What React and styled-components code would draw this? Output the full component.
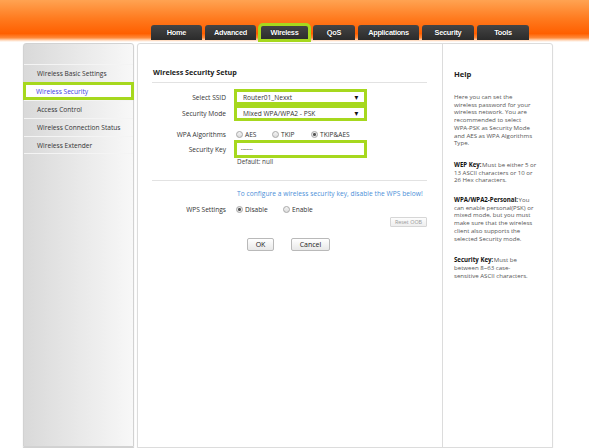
import styled, { createGlobalStyle } from 'styled-components';

const GlobalStyle = createGlobalStyle`
  html, body {
    margin: 0;
    padding: 0;
    background: #fff;
    font-family: "Open Sans", "Liberation Sans", Arial, sans-serif;
  }
`;

const GREEN = '#a6d81e';

const Header = styled.div`
  height: 42px;
  background: linear-gradient(
    to bottom,
    #ffa352 0%,
    #ff7a1e 45%,
    #ff5f00 80%,
    #ff8a3a 90%,
    #ffd9bd 96%,
    #ffffff 100%
  );
  display: flex;
  align-items: flex-end;
  padding-left: 151px;
  box-sizing: border-box;
`;

const Tabs = styled.div`
  display: flex;
  gap: 3px;
  margin-bottom: 2px;
  align-items: flex-end;
`;

const Tab = styled.div`
  width: ${p => p.$w}px;
  height: 15px;
  box-sizing: border-box;
  background: linear-gradient(to bottom, #454545, #2b2b2b);
  border-radius: 3px 3px 0 0;
  color: #fff;
  font-family: "Liberation Sans", Arial, sans-serif;
  font-weight: bold;
  font-size: 7.4px;
  letter-spacing: -0.3px;
  display: flex;
  align-items: center;
  justify-content: center;
  text-shadow: 0 0 1px #000;
  outline: ${p => (p.$active ? `3px solid ${GREEN}` : 'none')};
  outline-offset: -1px;
  margin: ${p => (p.$active ? '0 1px' : '0')};
`;

const Body = styled.div`
  display: flex;
  gap: 3px;
  padding-left: 23px;
  margin-top: 1px;
`;

const Sidebar = styled.div`
  width: 111px;
  height: 404px;
  box-sizing: border-box;
  border: 1px solid #d2d2d2;
  border-radius: 3px 3px 0 0;
  background: linear-gradient(to right, #d9d9d9, #f8f8f8);
  padding-top: 20px;
  box-shadow: 0 1px 1px #ccc;
`;

const MenuItem = styled.div`
  height: 18px;
  box-sizing: border-box;
  display: flex;
  align-items: center;
  padding-left: ${p => (p.$active ? '10px' : '13px')};
  font-size: 6.6px;
  color: ${p => (p.$active ? '#3a3ae6' : '#333')};
  border-top: 1px solid #f4f4f4;
  background: ${p => (p.$active ? '#fff' : 'transparent')};
  border: ${p => (p.$active ? `3px solid ${GREEN}` : undefined)};
  margin: ${p => (p.$active ? '0 -1px' : '0')};
  white-space: nowrap;
  &:last-child {
    border-bottom: 1px solid #f4f4f4;
  }
`;

const Panel = styled.div`
  width: 416px;
  height: 405px;
  box-sizing: border-box;
  border: 1px solid #dcdcdc;
  border-radius: 3px 3px 0 0;
  display: flex;
  background: #fff;
  box-shadow: 0 1px 1px #ddd;
`;

const Content = styled.div`
  width: 305px;
  box-sizing: border-box;
  padding: 23px 15px 0 14px;
  border-right: 1px solid #dcdcdc;
`;

const Title = styled.div`
  font-weight: bold;
  font-size: 7.2px;
  line-height: 10px;
  color: #1c1c1c;
  padding-left: 1px;
`;

const Rule = styled.div`
  height: 1px;
  background: #e2e2e2;
  margin-top: ${p => p.$mt}px;
`;

const Row = styled.div`
  display: flex;
  align-items: center;
  height: ${p => p.$h || 10}px;
  margin-top: ${p => p.$mt || 0}px;
`;

const Label = styled.div`
  width: 82px;
  text-align: right;
  font-size: 6.6px;
  color: #333;
  padding-right: 8px;
  box-sizing: border-box;
  flex-shrink: 0;
`;

const Highlight = styled.div`
  width: 133px;
  height: ${p => p.$h || 16}px;
  box-sizing: border-box;
  border: 3px solid ${GREEN};
  padding: 1px 2px;
  display: flex;
  align-items: stretch;
  background: #fff;
`;

const FakeSelect = styled.div`
  flex: 1;
  display: flex;
  align-items: center;
  justify-content: space-between;
  font-size: 6.6px;
  color: #333;
  padding: 0 2px 0 4px;
`;

const Arrow = styled.span`
  font-size: 7px;
  color: #111;
  transform: scaleX(0.9);
`;

const KeyBox = styled.div`
  flex: 1;
  display: flex;
  align-items: center;
  font-size: 3.6px;
  letter-spacing: 0.1px;
  color: #444;
  padding-left: 2px;
`;

const Radios = styled.div`
  display: flex;
  align-items: center;
  padding-left: 2px;
`;

const RadioOpt = styled.div`
  display: flex;
  align-items: center;
  gap: 2px;
  width: ${p => p.$w}px;
  font-size: 6.6px;
  color: #333;
`;

const Dot = styled.span`
  width: 5px;
  height: 5px;
  border-radius: 50%;
  border: 1px solid #a8a8a8;
  background: ${p =>
    p.$checked
      ? 'radial-gradient(circle, #555 0 1.3px, #e8e8e8 1.6px)'
      : 'linear-gradient(#f4f4f4, #dcdcdc)'};
  box-sizing: content-box;
`;

const Note = styled.div`
  font-size: 6.4px;
  line-height: 8px;
  color: #444;
  margin-top: ${p => p.$mt || 0}px;
  padding-left: ${p => p.$pl || 0}px;
`;

const Info = styled.div`
  font-size: 6.6px;
  line-height: 9px;
  color: #4b8fd8;
  margin-top: 8px;
  padding-left: 85px;
  letter-spacing: 0.05px;
  white-space: nowrap;
`;

const ResetRow = styled.div`
  display: flex;
  justify-content: flex-end;
  margin-top: 3px;
`;

const SmallButton = styled.div`
  width: 37px;
  height: 10px;
  box-sizing: border-box;
  border: 1px solid #d6d6d6;
  border-radius: 1px;
  background: linear-gradient(#fdfdfd, #eeeeee);
  color: #999;
  font-size: 5.4px;
  display: flex;
  align-items: center;
  justify-content: center;
`;

const Actions = styled.div`
  display: flex;
  gap: 17px;
  padding-left: 95px;
  margin-top: 11px;
`;

const Button = styled.div`
  width: ${p => p.$w}px;
  height: 13px;
  box-sizing: border-box;
  border: 1px solid #b9b9b9;
  border-radius: 2px;
  background: linear-gradient(#ffffff, #e8e8e8);
  color: #222;
  font-size: 7px;
  display: flex;
  align-items: center;
  justify-content: center;
`;

const Help = styled.div`
  flex: 1;
  padding: 25px 4px 0 11px;
`;

const HelpTitle = styled.div`
  font-weight: bold;
  font-size: 7.6px;
  line-height: 10px;
  color: #1c1c1c;
`;

const HelpText = styled.p`
  margin: ${p => p.$mt}px 0 0;
  font-size: 6.1px;
  line-height: 7.7px;
  color: #555;
  white-space: nowrap;
  b {
    color: #111;
    margin-right: 0.5px;
  }
`;

const tabs = [
  ['Home', 51],
  ['Advanced', 51],
  ['Wireless', 49, true],
  ['QoS', 42],
  ['Applications', 61],
  ['Security', 52],
  ['Tools', 52],
];

const menu = [
  'Wireless Basic Settings',
  'Wireless Security',
  'Access Control',
  'Wireless Connection Status',
  'Wireless Extender',
];

export default function App() {
  return (
    <>
      <GlobalStyle />
      <Header>
        <Tabs>
          {tabs.map(([name, w, active]) => (
            <Tab key={name} $w={w} $active={active}>
              {name}
            </Tab>
          ))}
        </Tabs>
      </Header>
      <Body>
        <Sidebar>
          {menu.map(item => (
            <MenuItem key={item} $active={item === 'Wireless Security'}>
              {item}
            </MenuItem>
          ))}
        </Sidebar>
        <Panel>
          <Content>
            <Title>Wireless Security Setup</Title>
            <Rule $mt={5} />
            <Row $h={16} $mt={6}>
              <Label>Select SSID</Label>
              <Highlight>
                <FakeSelect>
                  <span>Router01_Nexxt</span>
                  <Arrow>▼</Arrow>
                </FakeSelect>
              </Highlight>
            </Row>
            <Row $h={16}>
              <Label>Security Mode</Label>
              <Highlight>
                <FakeSelect>
                  <span>Mixed WPA/WPA2 - PSK</span>
                  <Arrow>▼</Arrow>
                </FakeSelect>
              </Highlight>
            </Row>
            <Row $mt={8}>
              <Label>WPA Algorithms</Label>
              <Radios>
                <RadioOpt $w={36}>
                  <Dot />
                  AES
                </RadioOpt>
                <RadioOpt $w={39}>
                  <Dot />
                  TKIP
                </RadioOpt>
                <RadioOpt $w={50}>
                  <Dot $checked />
                  TKIP&amp;AES
                </RadioOpt>
              </Radios>
            </Row>
            <Row $h={18} $mt={1}>
              <Label>Security Key</Label>
              <Highlight $h={18}>
                <KeyBox>••••••••</KeyBox>
              </Highlight>
            </Row>
            <Note $pl={85}>Default: null</Note>
            <Rule $mt={14} />
            <Info>To configure a wireless security key, disable the WPS below!</Info>
            <Row $mt={6}>
              <Label>WPS Settings</Label>
              <Radios>
                <RadioOpt $w={47}>
                  <Dot $checked />
                  Disable
                </RadioOpt>
                <RadioOpt $w={40}>
                  <Dot />
                  Enable
                </RadioOpt>
              </Radios>
            </Row>
            <ResetRow>
              <SmallButton>Reset OOB</SmallButton>
            </ResetRow>
            <Actions>
              <Button $w={27}>OK</Button>
              <Button $w={39}>Cancel</Button>
            </Actions>
          </Content>
          <Help>
            <HelpTitle>Help</HelpTitle>
            <HelpText $mt={14}>
              Here you can set the
              <br />
              wireless password for your
              <br />
              wireless network. You are
              <br />
              recommended to select
              <br />
              WPA-PSK as Security Mode
              <br />
              and AES as WPA Algorithms
              <br />
              Type.
            </HelpText>
            <HelpText $mt={14}>
              <b>WEP Key:</b>Must be either 5 or
              <br />
              13 ASCII characters or 10 or
              <br />
              26 Hex characters.
            </HelpText>
            <HelpText $mt={12}>
              <b>WPA/WPA2-Personal:</b>You
              <br />
              can enable personal(PSK) or
              <br />
              mixed mode, but you must
              <br />
              make sure that the wireless
              <br />
              client also supports the
              <br />
              selected Security mode.
            </HelpText>
            <HelpText $mt={14}>
              <b>Security Key:</b>Must be
              <br />
              between 8~63 case-
              <br />
              sensitive ASCII characters.
            </HelpText>
          </Help>
        </Panel>
      </Body>
    </>
  );
}
